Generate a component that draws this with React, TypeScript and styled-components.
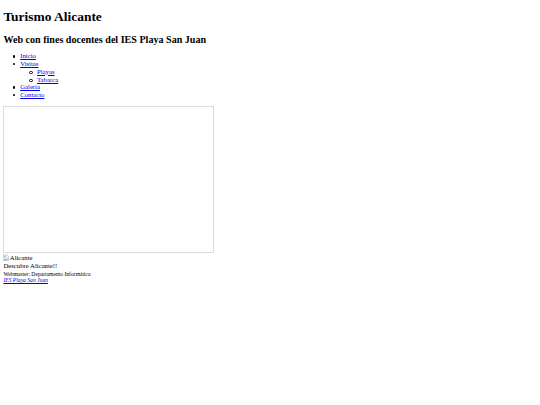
import React from "react";
import styled, { createGlobalStyle } from "styled-components";

const GlobalStyle = createGlobalStyle`
  html, body { background: #ffffff; }
  body {
    margin: 0;
    font-family: "Liberation Serif", "Times New Roman", serif;
    font-size: 6.72px;
    color: #000000;
  }
`;

const Page = styled.div`
  display: flow-root;
  padding: 0 3.4px;
`;

const Title = styled.h1`
  font-size: 13.44px;
  line-height: 15px;
  font-weight: bold;
  margin: 9px 0 0;
`;

const Subtitle = styled.h2`
  font-size: 10.08px;
  line-height: 11.5px;
  font-weight: bold;
  margin: 10.25px 0 0;
`;

const Menu = styled.ul<{ $nested?: boolean }>`
  margin: ${(p) => (p.$nested ? "0" : "6.65px 0 0")};
  padding-left: 16.8px;
  list-style: none;
`;

const MenuItem = styled.li<{ $nested?: boolean }>`
  position: relative;
  line-height: 7.75px;

  &::before {
    content: "";
    position: absolute;
    left: -7.6px;
    top: 2.9px;
    width: ${(p) => (p.$nested ? "1.6px" : "2.3px")};
    height: ${(p) => (p.$nested ? "1.6px" : "2.3px")};
    border-radius: 50%;
    box-sizing: content-box;
    background: ${(p) => (p.$nested ? "transparent" : "#000")};
    border: ${(p) => (p.$nested ? "0.6px solid #000" : "none")};
  }
`;

const Link = styled.a`
  color: #0000ee;
  text-decoration: underline;
`;

const MapFrame = styled.div`
  box-sizing: border-box;
  margin-top: 7.1px;
  width: 211px;
  height: 147px;
  border: 1px solid #dcdcdc;
  background: #ffffff;
`;

const ImageRow = styled.div`
  display: flex;
  align-items: center;
  gap: 0.4px;
  margin-top: 1px;
  height: 8px;
  line-height: 8px;
`;

const BrokenIcon = styled.svg`
  width: 6px;
  height: 7px;
  flex-shrink: 0;
`;

const Tagline = styled.div`
  line-height: 8px;
`;

const Footer = styled.footer`
  font-size: 5.6px;
  line-height: 6.8px;
  margin-top: 0.6px;
`;

const Address = styled.address`
  font-style: italic;
`;

export default function App() {
  return (
    <>
      <GlobalStyle />
      <Page>
        <Title>Turismo Alicante</Title>
        <Subtitle>Web con fines docentes del IES Playa San Juan</Subtitle>
        <nav>
          <Menu>
            <MenuItem>
              <Link href="#">Inicio</Link>
            </MenuItem>
            <MenuItem>
              <Link href="#">Visitas</Link>
              <Menu $nested>
                <MenuItem $nested>
                  <Link href="#">Playas</Link>
                </MenuItem>
                <MenuItem $nested>
                  <Link href="#">Tabarca</Link>
                </MenuItem>
              </Menu>
            </MenuItem>
            <MenuItem>
              <Link href="#">Galeria</Link>
            </MenuItem>
            <MenuItem>
              <Link href="#">Contacto</Link>
            </MenuItem>
          </Menu>
        </nav>
        <MapFrame />
        <ImageRow>
          <BrokenIcon viewBox="0 0 10 12">
            <path d="M0.5 1.5 H7 L9.5 4 V6 L7.5 7.5 L5.5 6 L3.5 8 L0.5 6.5 Z" fill="#eef3f7" stroke="#9aa3ab" strokeWidth="0.8" />
            <path d="M0.5 8.5 L3.5 10 L5.5 8 L7.5 9.5 L9.5 8 V11.5 H0.5 Z" fill="#eef3f7" stroke="#9aa3ab" strokeWidth="0.8" />
            <circle cx="3" cy="4" r="1" fill="#5b9b3c" />
            <path d="M1.5 10.8 L4 9.5 L8.8 10.8 Z" fill="#4d8ad0" />
          </BrokenIcon>
          <span>Alicante</span>
        </ImageRow>
        <Tagline>Descubre Alicante!!</Tagline>
        <Footer>
          <div>Webmaster: Departamento Informática</div>
          <Address>
            <Link href="#">IES Playa San Juan</Link>
          </Address>
        </Footer>
      </Page>
    </>
  );
}
